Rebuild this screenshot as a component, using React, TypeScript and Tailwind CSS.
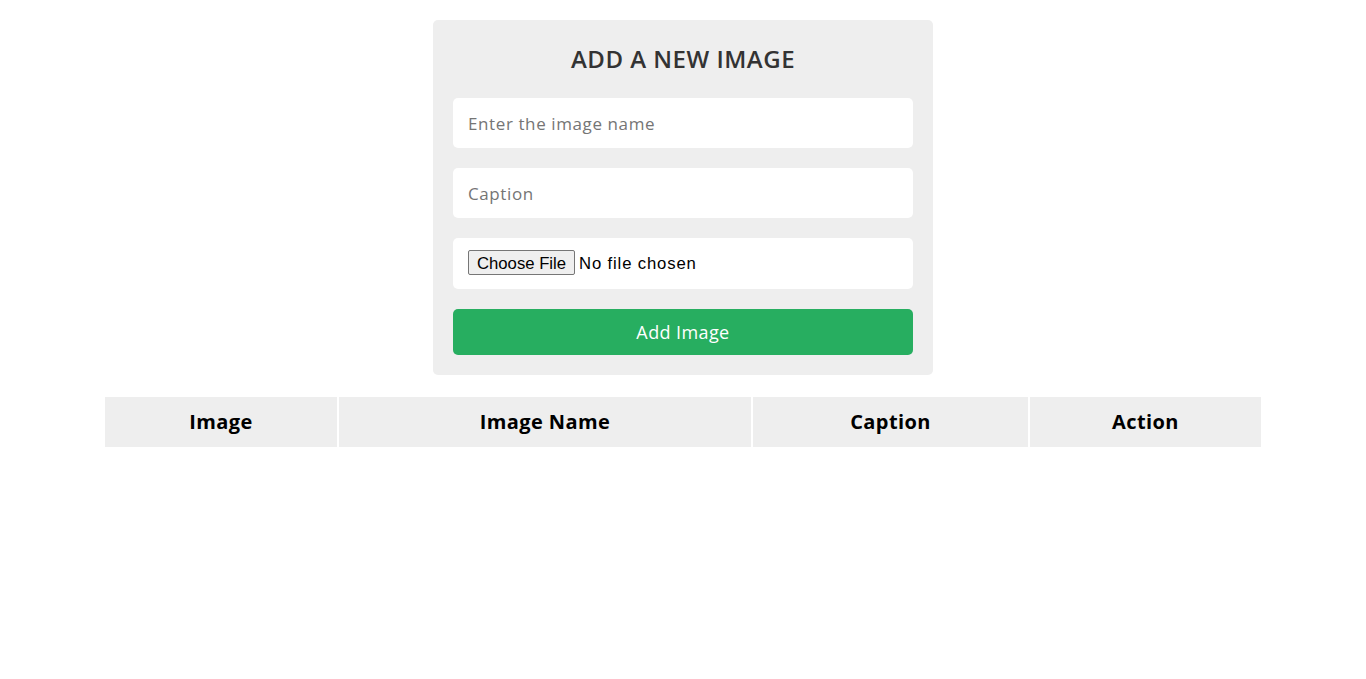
import React from "react";

export default function App() {
  const font = { fontFamily: '"Open Sans", "Noto Sans", sans-serif' };
  return (
    <div className="min-h-screen bg-white pt-[20px]" style={font}>
      <div className="mx-auto w-[500px] rounded-[5px] bg-[#eeeeee] p-[20px]">
        <h2 className="mb-[20px] flex h-[38px] items-center justify-center text-[24px] font-semibold tracking-[0.5px] text-[#333333]">
          ADD A NEW IMAGE
        </h2>
        <div className="flex flex-col gap-[20px]">
          <input
            type="text"
            placeholder="Enter the image name"
            className="h-[50px] w-full rounded-[5px] bg-white px-[15px] text-[17px] tracking-[0.6px] text-[#333] outline-none placeholder:text-[#757575]"
          />
          <input
            type="text"
            placeholder="Caption"
            className="h-[50px] w-full rounded-[5px] bg-white px-[15px] text-[17px] tracking-[0.6px] text-[#333] outline-none placeholder:text-[#757575]"
          />
          <div className="flex h-[51px] w-full items-center rounded-[5px] bg-white px-[15px]">
            <input
              type="file"
              className="text-[16.7px] tracking-[0.85px] text-black file:mr-[4px] file:h-[25px] file:rounded-[2px] file:border file:border-solid file:border-[#767676] file:bg-[#efefef] file:px-[8px] file:text-[16.7px] file:tracking-normal file:text-black"
              style={{ fontFamily: '"Liberation Sans", Arial, sans-serif' }}
            />
          </div>
          <button className="h-[46px] w-full rounded-[5px] bg-[#27ae60] text-[18px] tracking-[0.4px] text-white">
            Add Image
          </button>
        </div>
      </div>
      <div className="mt-[20px] flex justify-center">
        <table className="w-[1160px] border-separate border-spacing-[2px]">
          <thead>
            <tr className="h-[50px] text-[20px] font-bold tracking-[0.4px] text-black">
              <th className="w-[232px] bg-[#eeeeee]">Image</th>
              <th className="w-[412px] bg-[#eeeeee]">Image Name</th>
              <th className="w-[275px] bg-[#eeeeee]">Caption</th>
              <th className="w-[231px] bg-[#eeeeee]">Action</th>
            </tr>
          </thead>
          <tbody></tbody>
        </table>
      </div>
    </div>
  );
}
